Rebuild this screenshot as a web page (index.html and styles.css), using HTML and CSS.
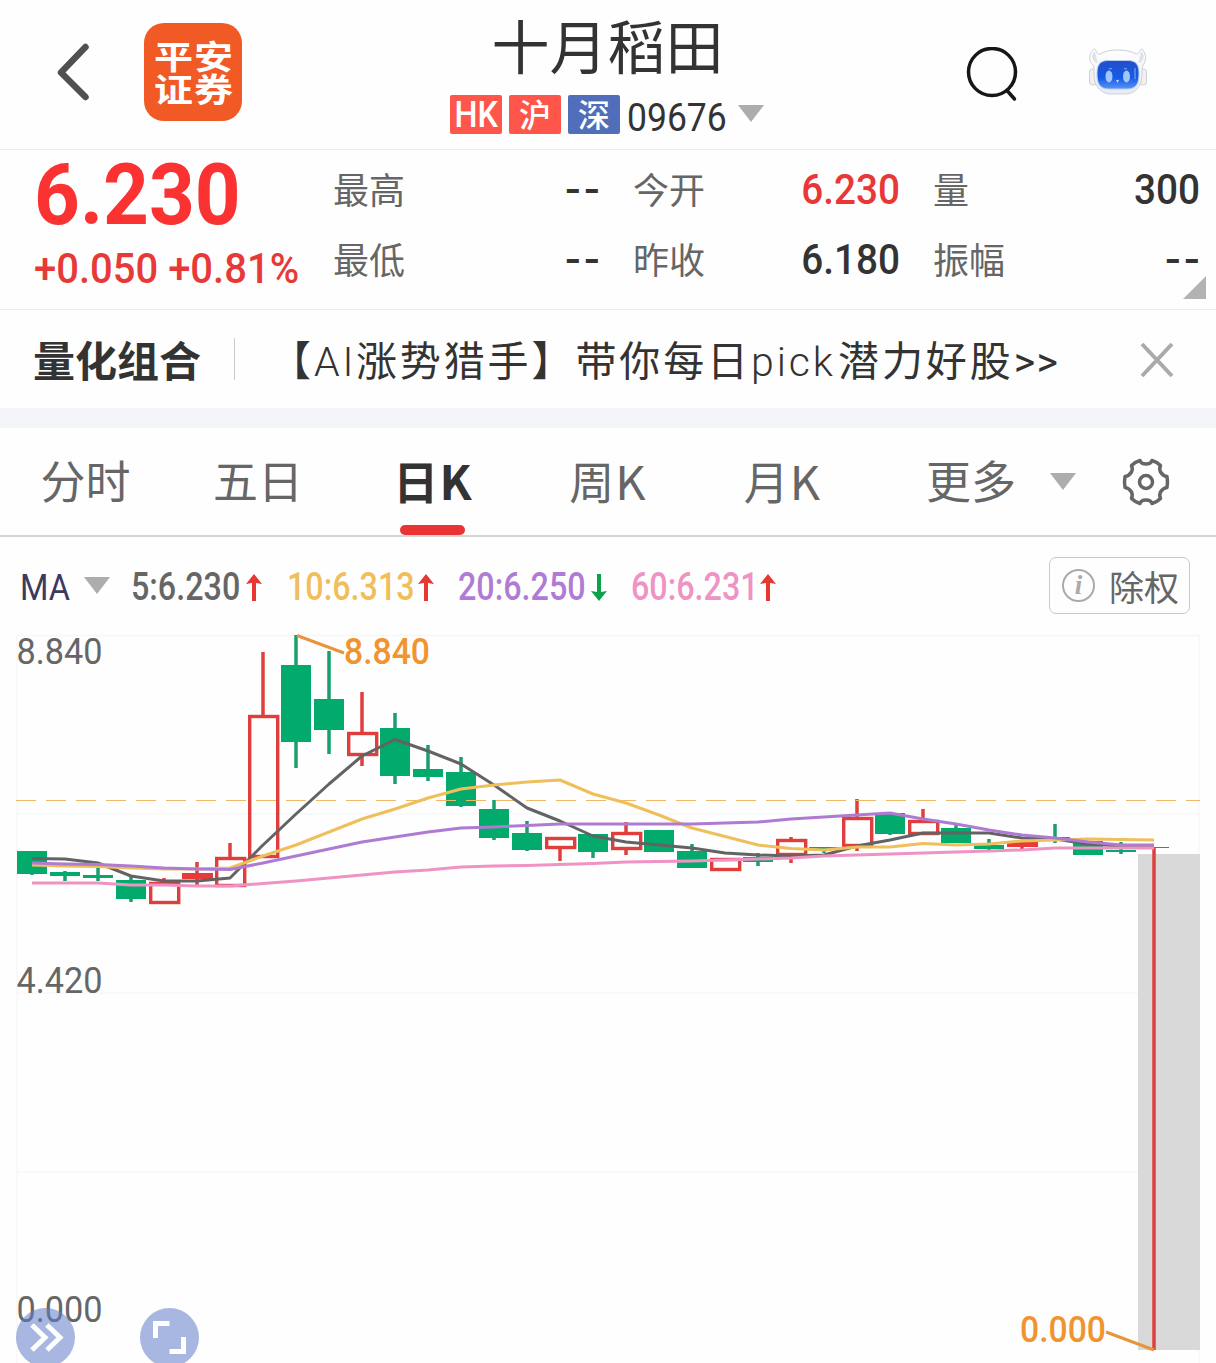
FILE: index.html
```html
<!DOCTYPE html>
<html lang="zh-CN">
<head>
    <meta charset="UTF-8">
    <meta name="viewport" content="width=device-width, initial-scale=1.0">
    <title>十月稻田 09676</title>
    <link rel="stylesheet" href="styles.css">
</head>
<body>
    <header class="header">
        <div class="header-left">
            <svg class="back" width="34" height="60" viewBox="0 0 34 60"><path d="M29.500 5 L5 30.500 L29.500 55"/></svg>
            <svg class="logo" width="98" height="98" viewBox="0 0 98 98">
                <rect width="98" height="98" rx="20"/>
                <text transform="translate(10 45.500) scale(1 .84)" textLength="79">平安</text>
                <text transform="translate(10 79) scale(1 .84)" textLength="79">证券</text>
            </svg>
        </div>
        <div class="header-title">
            <h1>十月稻田</h1>
            <div class="stock-code">
                <span class="badge hk"><b>HK</b></span>
                <span class="badge">沪</span>
                <span class="badge blue">深</span>
                <span class="code"><span class="num">09676</span></span>
                <span class="triangle"></span>
            </div>
        </div>
        <div class="header-right">
            <svg width="54" height="58" viewBox="0 0 54 58"><circle class="ring" cx="26" cy="25" r="23.500"/><path class="ring" d="M41 43.500 L48.500 52"/></svg>
            <svg class="robot" width="60" height="48" viewBox="0 0 60 48">
                <defs>
                    <linearGradient id="screen" x1="0" y1="0" x2="0" y2="1">
                        <stop offset="0" stop-color="#2250c8"/>
                        <stop offset="0.6" stop-color="#1559e8"/>
                        <stop offset="1" stop-color="#5a93f5"/>
                    </linearGradient>
                    <linearGradient id="shell" x1="0" y1="0" x2="0" y2="1">
                        <stop offset="0" stop-color="#ffffff"/>
                        <stop offset="1" stop-color="#e6ebf5"/>
                    </linearGradient>
                </defs>
                <rect x="1.500" y="22" width="7" height="16" rx="3" fill="#f3efef" stroke="#cfd0d6"/>
                <rect x="51.500" y="22" width="7" height="16" rx="3" fill="#f3efef" stroke="#cfd0d6"/>
                <path d="M6 2 C1 6 0 14 5 18 C7 21 5 29 7 35 C10 43 16 47 23 47 L37 47 C45 47 51 42 53 35 C55 29 53 22 55 18 C59 13 58 6 54 2 C51 2 53 7 48 7 C43 4 37 3 30 3 C23 3 17 4 12 7 C7 8 9 2 6 2 Z" fill="url(#shell)" stroke="#ccd1da"/>
                <path d="M4 9 C5 14 7 16 10 16 C8 12 9 8 6 4 M56 9 C55 14 53 16 50 16 C52 12 51 8 54 4" fill="#dfe2e8"/>
                <path d="M20 13.500 L40 13.500 C48 13.500 51 18 51 26 C51 36 49 42 39 42 L21 42 C11 42 9 36 9 26 C9 18 12 13.500 20 13.500 Z" fill="url(#screen)" stroke="#bccbed"/>
                <ellipse cx="21" cy="29.500" rx="3.500" ry="6" fill="#9fc7fb"/>
                <ellipse cx="38.500" cy="29.500" rx="3.500" ry="6" fill="#9fc7fb"/>
                <path d="M21 22 L24 21.500 M36 21.500 L39 22 M47 21 L47 32" stroke="#85aef2" fill="none"/>
                <path d="M28 33 L31 33 L29.500 36 Z" fill="#b9d6ff"/>
            </svg>
        </div>
    </header>

    <section class="quote">
        <div class="price">
            <div class="last"><span class="num">6.230</span></div>
            <div class="change"><span class="num">+0.050 +0.81%</span></div>
        </div>
        <dl class="stats">
            <dt>最高</dt><dd class="none">--</dd>
            <dt>今开</dt><dd class="up">6.230</dd>
            <dt>量</dt><dd>300</dd>
            <dt>最低</dt><dd class="none">--</dd>
            <dt>昨收</dt><dd>6.180</dd>
            <dt>振幅</dt><dd class="none">--</dd>
        </dl>
        <span class="corner"></span>
    </section>

    <section class="promo">
        <strong>量化组合</strong>
        <p>【<span class="latin ai">AI</span>涨势猎手】带你每日<span class="latin pick">pick</span>潜力好股<span class="latin more">&gt;&gt;</span></p>
        <svg class="close" width="36" height="38" viewBox="0 0 36 38"><path d="M3 4 L33 36 M33 4 L3 36"/></svg>
    </section>

    <nav class="tabs">
        <a>分时</a>
        <a>五日</a>
        <a class="active">日<span class="k">K</span></a>
        <a>周<span class="k">K</span></a>
        <a>月<span class="k">K</span></a>
        <a class="tab-more">更多<span class="triangle"></span></a>
        <svg class="gear" width="50" height="50" viewBox="0 0 50 50">
            <path d="M19 3.500 Q20 7 25 7 Q30 7 31 3.500 Q36 5 39.500 8.500 Q38 12 39.500 15 Q42 19 46 19.500 Q47 25 46 30.500 Q42 31 39.500 35 Q38 38 39.500 41.500 Q36 45 31 46.500 Q30 43 25 43 Q20 43 19 46.500 Q14 45 10.500 41.500 Q12 38 10.500 35 Q8 31 4 30.500 Q3 25 4 19.500 Q8 19 10.500 15 Q12 12 10.500 8.500 Q14 5 19 3.500 Z"/>
            <circle cx="25" cy="25" r="6.500"/>
        </svg>
    </nav>

    <section class="ma-bar">
        <span class="ma-name"><span class="num">MA</span></span>
        <span class="triangle"></span>
        <div class="ma ma5"><span class="num">5:6.230</span><svg class="arrow up" width="18" height="28" viewBox="0 0 18 28"><path d="M9 0 L17 10 L11 9 L11 27 L7 27 L7 9 L1 10 Z"/></svg></div>
        <div class="ma ma10"><span class="num">10:6.313</span><svg class="arrow up" width="18" height="28" viewBox="0 0 18 28"><path d="M9 0 L17 10 L11 9 L11 27 L7 27 L7 9 L1 10 Z"/></svg></div>
        <div class="ma ma20"><span class="num">20:6.250</span><svg class="arrow down" width="18" height="28" viewBox="0 0 18 28"><path d="M9 27 L17 17 L11 18 L11 0 L7 0 L7 18 L1 17 Z"/></svg></div>
        <div class="ma ma60"><span class="num">60:6.231</span><svg class="arrow up" width="18" height="28" viewBox="0 0 18 28"><path d="M9 0 L17 10 L11 9 L11 27 L7 27 L7 9 L1 10 Z"/></svg></div>
        <button class="adjust"><span class="info">i</span>除权</button>
    </section>

    <main class="chart-area">
        <svg id="chart" width="1216" height="743" viewBox="0 620 1216 743"></svg>
        <div class="floating">
            <button><svg width="59" height="59" viewBox="0 0 59 59"><path d="M16 17 L29 29.500 L16 42 M31 17 L44 29.500 L31 42"/></svg></button>
            <button><svg width="59" height="59" viewBox="0 0 59 59"><path d="M29.500 15.500 L15.500 15.500 L15.500 30 M29.500 43.500 L43.500 43.500 L43.500 29"/></svg></button>
        </div>
    </main>

    <script>
        // color, high, top, bottom, low
        const candles = [
            ['g', 851, 851, 874, 875], ['g', 871, 872, 876, 881], ['g', 867, 875, 878, 881],
            ['g', 876, 880, 899, 902], ['r', 878, 882, 904, 904], ['r', 862, 873, 879, 885],
            ['r', 843, 857, 887, 887], ['r', 652, 715, 858, 858], ['g', 635, 665, 742, 768],
            ['g', 651, 699, 730, 754], ['r', 692, 732, 756, 766], ['g', 713, 728, 776, 784],
            ['g', 745, 769, 777, 781], ['g', 757, 772, 806, 807], ['g', 800, 809, 838, 840],
            ['g', 821, 833, 850, 851], ['r', 837, 837, 849, 861], ['g', 834, 834, 852, 858],
            ['r', 822, 832, 850, 855], ['g', 830, 830, 852, 852], ['g', 844, 851, 868, 868],
            ['r', 858, 858, 871, 871], ['g', 853, 857, 862, 866], ['r', 837, 839, 856, 863],
            ['g', 847, 847, 849, 853], ['r', 799, 817, 847, 851], ['g', 813, 813, 834, 835],
            ['r', 809, 820, 835, 835], ['g', 825, 828, 843, 843], ['g', 839, 845, 849, 852],
            ['r', 842, 842, 847, 849], ['g', 824, 837, 839, 843], ['g', 841, 841, 855, 855],
            ['g', 842, 850, 852, 854], ['r', 847, 847, 848, 1350]
        ];

        const averages = {
            ma5: [858.5, 859, 863, 876, 881, 881, 878, 845, 814, 784, 756, 739.5, 751, 764, 785, 808, 821, 836, 842, 845, 848, 853, 855, 856, 855, 846, 840, 833, 833, 833, 838, 839, 844, 846, 846],
            ma10: [865, 866, 866.5, 868, 869, 869, 868, 856, 845, 832, 819, 809, 798, 789, 785, 782, 780, 794, 803, 815, 828, 836.5, 845, 848.5, 850, 847, 847, 843.5, 845, 844, 841, 840, 839, 839.5, 840],
            ma20: [863, 864, 864.5, 866, 868, 869, 869.5, 863, 856, 849, 842, 837, 832, 828, 827, 825.5, 824, 824, 824, 824, 824, 823, 822, 819, 817, 815, 813, 819, 824, 830, 835, 838, 842, 845, 845],
            ma60: [883, 883, 883, 885, 885, 886, 886, 883.5, 881, 878, 875, 872, 870, 867, 866, 865.5, 864.5, 863.5, 862, 861.5, 861, 860, 859, 858, 856, 855, 854, 853, 852, 851, 850, 848, 848, 848, 848]
        };

        const x = i => 32 + 33 * i;
        let svg = '<path class="grid" d="M17 635.5 H1199 V1363 M17 635.5 V1363 M17 814 H1199 M17 993 H1199 M17 1172 H1199"/>';
        svg += '<rect class="shade" x="1138" y="854" width="62" height="496"/>';

        candles.forEach(([color, high, top, bottom, low], i) => {
            const c = x(i);
            const h = bottom - top;
            if (h < 2) {
                svg += `<path class="last-tick" d="M${c - 15} 847.5 H${c + 15}"/>`;
            } else if (color === 'g') {
                svg += `<rect class="green" x="${c - 15}" y="${top}" width="30" height="${h}"/>`;
            } else if (h < 7) {
                svg += `<rect class="red-fill" x="${c - 15}" y="${top}" width="31" height="${h}"/>`;
            } else {
                svg += `<rect class="red" x="${c - 13.3}" y="${top + 1.5}" width="28" height="${h - 3}"/>`;
            }
            svg += `<path class="wick ${color}" d="M${c} ${high} V${top} M${c} ${bottom} V${low}"/>`;
        });

        svg += '<path class="cost" d="M16 800.5 H1200"/>';
        for (const name in averages) {
            const points = averages[name].map((y, i) => `${x(i)},${y}`).join(' ');
            svg += `<polyline class="line ${name}" points="${points}"/>`;
        }

        const label = (lx, ly, text, cls) => `<text class="${cls}" x="${lx}" y="${ly}" textLength="86" lengthAdjust="spacingAndGlyphs">${text}</text>`;
        svg += label(16.5, 664, '8.840', 'axis') + label(16.5, 993, '4.420', 'axis') + label(16.5, 1322, '0.000', 'axis');
        svg += '<path class="leader" d="M297 635.5 L344 653 M1106 1332 L1154 1350"/>';
        svg += label(344, 664, '8.840', 'mark') + label(1020, 1342, '0.000', 'mark');
        document.getElementById('chart').innerHTML = svg;
    </script>
</body>
</html>
```
FILE: styles.css
```css
* {
    box-sizing: border-box;
}

body {
    margin: 0;
    width: 1216px;
    height: 1363px;
    overflow: hidden;
    background: #fefefe;
    color: #333;
    font-family: "Noto Sans CJK SC", sans-serif;
}

button {
    font-family: inherit;
    padding: 0;
    border: none;
    background: none;
}

.num {
    display: inline-block;
    font-family: Roboto, "Noto Sans CJK SC", sans-serif;
    transform-origin: left center;
    white-space: nowrap;
}

.triangle {
    border: 13px solid transparent;
    border-top: 17px solid #adadad;
    border-bottom: none;
}

/* header */
.header {
    display: grid;
    grid-template-columns: 250px 1fr 250px;
    height: 150px;
    border-bottom: 1px solid #ebebeb;
}

.header-left {
    display: flex;
    align-items: center;
    padding: 0 0 5px 56px;
    gap: 54px;
}

.back path {
    fill: none;
    stroke: #505050;
    stroke-width: 6.5;
    stroke-linecap: round;
    stroke-linejoin: round;
}

.logo rect {
    fill: #f15a24;
}

.logo text {
    fill: #fff;
    font-size: 39px;
    font-weight: 700;
}

.header-title {
    display: flex;
    flex-direction: column;
    align-items: center;
}

h1 {
    margin: 6px 1px 0 0;
    font-size: 58px;
    line-height: 76px;
    font-weight: 400;
}

.stock-code {
    display: flex;
    gap: 7px;
    width: 316px;
    margin-top: 13px;
}

.badge {
    width: 52px;
    height: 39px;
    border-radius: 2px;
    background: #ff564b;
    color: #fff;
    font-size: 32px;
    line-height: 36px;
    font-weight: 500;
    text-align: center;
}

.badge b {
    display: inline-block;
    margin: 0 -5px;
    font-family: Roboto, sans-serif;
    font-size: 36px;
    font-weight: 500;
    line-height: 39px;
    transform: scaleX(0.9);
}

.badge.blue {
    background: #506eba;
}

.code {
    width: 105px;
    font-size: 39px;
    line-height: 38px;
}

.code .num {
    transform: scaleX(0.91);
}

.stock-code .triangle {
    margin: 10px 0 0 -1px;
}

.header-right {
    display: flex;
    align-items: flex-start;
    gap: 68px;
    padding-top: 47px;
}

.ring {
    fill: none;
    stroke: #161616;
    stroke-width: 3.5;
    stroke-linecap: round;
}

/* quote */
.quote {
    position: relative;
    display: flex;
    height: 160px;
    border-bottom: 1px solid #ebebeb;
}

.price {
    width: 333px;
    padding-left: 34px;
    color: #fa3232;
}

.last {
    height: 85px;
    font-size: 86px;
    font-weight: 700;
    line-height: 88px;
}

.last .num {
    line-height: 87px;
    transform: translateY(-7px) scaleX(0.93);
}

.change {
    color: #e73a38;
    font-size: 43px;
    font-weight: 500;
    line-height: 58px;
}

.change .num {
    transform: scaleX(0.93);
}

.stats {
    display: grid;
    grid-template-columns: 110px 157px 143px 157px 143px 157px;
    grid-auto-rows: 70px;
    margin: 4px 0 0;
    line-height: 70px;
}

.stats dt {
    margin-top: -1px;
    color: #666;
    font-size: 36px;
}

.stats dt:nth-of-type(3n + 2),
.stats dt:nth-of-type(3n) {
    padding-left: 33px;
}

.stats dd {
    margin: 0;
    font-family: Roboto, sans-serif;
    font-size: 43px;
    font-weight: 500;
    text-align: right;
    transform: scaleX(0.9);
    transform-origin: right center;
}

.stats dd.up {
    color: #e83736;
}

.stats dd.none {
    margin-right: -3px;
    letter-spacing: 3px;
    transform: scaleX(1.08);
}

.corner {
    position: absolute;
    right: 10px;
    bottom: 10px;
    border-left: 23px solid transparent;
    border-bottom: 23px solid #b3b3b3;
}

/* promo */
.promo {
    display: flex;
    align-items: center;
    height: 118px;
    padding: 0 41px 0 33px;
    border-bottom: 20px solid #f4f5f9;
    line-height: 60px;
}

.promo strong {
    width: 202px;
    height: 42px;
    border-right: 1px solid #ccc;
    font-size: 42px;
    line-height: 42px;
}

.promo p {
    flex: 1;
    margin: 2px 0 0 35px;
    font-size: 41px;
    letter-spacing: 2.9px;
    white-space: nowrap;
}

.latin {
    display: inline-block;
    font-family: Roboto, sans-serif;
    font-weight: 300;
}

.ai {
    width: 42px;
}

.pick {
    width: 87px;
}

.more {
    font-weight: 400;
    letter-spacing: 1.5px;
}

.close path {
    fill: none;
    stroke: #aaa;
    stroke-width: 4;
}

/* tabs */
.tabs {
    display: grid;
    grid-template-columns: 171px 174px 175px 175px 174px 233px 1fr;
    align-items: center;
    height: 109px;
    border-bottom: 2px solid #d4d6d5;
    color: #666;
    font-size: 45px;
    line-height: 104px;
}

.tabs a {
    height: 107px;
    text-align: center;
}

.k {
    font-size: 47px;
    margin-left: 1px;
}

.tabs .active {
    position: relative;
    color: #333;
    font-weight: 700;
}

.tabs .active::after {
    content: "";
    position: absolute;
    left: 55px;
    bottom: 0;
    width: 65px;
    height: 10px;
    border-radius: 5px;
    background: #ea3433;
}

.tabs .tab-more {
    display: flex;
    align-items: flex-start;
    padding-left: 57px;
    gap: 34px;
}

.tab-more .triangle {
    margin-top: 45px;
}

.gear {
    margin-left: 19px;
}

.gear path,
.gear circle {
    fill: none;
    stroke: #666;
    stroke-width: 3.5;
    stroke-linejoin: round;
}

/* moving averages */
.ma-bar {
    display: flex;
    align-items: flex-start;
    height: 83px;
    padding: 20px 26px 0 20px;
    line-height: 60px;
}

.ma-name {
    width: 64px;
    color: #3c3a5e;
    font-size: 37px;
    line-height: 55px;
}

.ma-name .num {
    transform: scaleX(0.88);
}

.ma-bar .triangle {
    margin: 20px 21px 0 0;
}

.ma {
    display: flex;
    font-size: 38px;
    font-weight: 500;
}

.ma .num {
    transform: scaleX(0.85);
}

.ma5 {
    width: 156px;
    color: #666;
}

.ma10 {
    width: 171px;
    color: #f0be5a;
}

.ma20 {
    width: 173px;
    color: #b07cd3;
}

.ma60 {
    color: #ee93c3;
}

.arrow {
    flex: none;
    margin-top: 17px;
}

.ma5 .num {
    width: 114px;
}

.ma10 .num {
    width: 130px;
}

.ma20 .num {
    width: 132px;
}

.ma60 .num {
    width: 128px;
}

.arrow.up {
    fill: #e73733;
}

.arrow.down {
    fill: #0ca24a;
}

.adjust {
    display: flex;
    align-items: center;
    justify-content: space-between;
    width: 141px;
    height: 57px;
    margin-left: auto;
    padding: 0 10px 0 12px;
    border: 1.5px solid #c9c9c9;
    border-radius: 7px;
    color: #666;
    font-size: 35px;
    line-height: 55px;
}

.info {
    width: 33px;
    height: 33px;
    border: 2px solid #aaa;
    border-radius: 50%;
    color: #aaa;
    font: italic bold 27px/29px "Liberation Serif", serif;
    text-align: center;
}

/* chart */
.chart-area {
    position: relative;
    height: 743px;
    overflow: hidden;
}

#chart {
    display: block;
}

.grid {
    fill: none;
    stroke: #f7f7f7;
    stroke-width: 1.5;
}

.shade {
    fill: #d9d9d9;
}

.green {
    fill: #02aa6b;
}

.red-fill {
    fill: #e83a38;
}

.red {
    fill: none;
    stroke: #e03e3c;
    stroke-width: 3.4;
}

.wick {
    fill: none;
    stroke-width: 3.5;
}

.wick.g {
    stroke: #18a06c;
}

.wick.r {
    stroke: #df3f3d;
}

.last-tick {
    stroke: #c0504d;
    stroke-width: 1;
}

.cost {
    stroke: #efb865;
    stroke-width: 1.2;
    stroke-dasharray: 20 10;
}

.line {
    fill: none;
    stroke-width: 3;
    stroke-linejoin: round;
}

.line.ma5 {
    stroke: #636363;
}

.line.ma10 {
    stroke: #efbf5c;
}

.line.ma20 {
    stroke: #af7bd2;
}

.line.ma60 {
    stroke: #ef93c4;
}

.axis,
.mark {
    font-family: Roboto, sans-serif;
    font-size: 37px;
    fill: #666;
}

.mark {
    font-weight: 500;
    fill: #f0942f;
}

.leader {
    fill: none;
    stroke: #e8943a;
    stroke-width: 3;
}

.floating {
    position: absolute;
    left: 16px;
    top: 688px;
    display: flex;
    gap: 65px;
}

.floating button {
    width: 59px;
    height: 59px;
    border-radius: 50%;
    background: rgba(96, 124, 200, 0.55);
}

.floating path {
    fill: none;
    stroke: #fff;
    stroke-width: 5;
}
```
